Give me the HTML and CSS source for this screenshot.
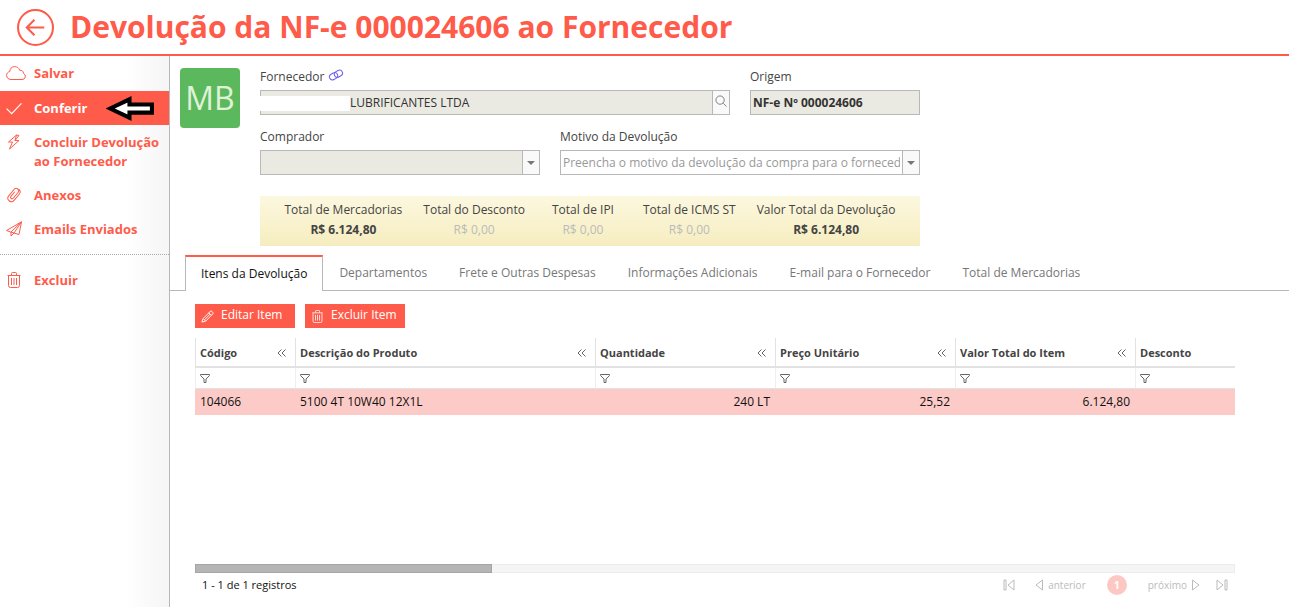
FILE: index.html
```html
<!DOCTYPE html>
<html lang="pt-BR">
<head>
<meta charset="utf-8">
<title>Devolução da NF-e 000024606 ao Fornecedor</title>
<link rel="stylesheet" href="styles.css">
</head>
<body>
<svg class="sprite" aria-hidden="true">
  <symbol id="trash" viewBox="0 0 14 16"><path d="M.5 3.500h13M4.500 3V1.500q0-1 1-1h3q1 0 1 1V3M1.500 4v9.500q0 2 2 2h7q2 0 2-2V4M4.500 6v7M7 6v7M9.500 6v7"/></symbol>
  <symbol id="filter" viewBox="0 0 10 9"><path d="M.5.5h9v1L6 5v3.500H4V5L.5 1.500z"/></symbol>
  <symbol id="collapse" viewBox="0 0 9 8"><path d="M4.500.5L1 4l3.500 3.500M8.500.5L5 4l3.500 3.500"/></symbol>
</svg>
<header class="topbar">
  <a class="back" href="#" aria-label="Voltar"><svg viewBox="0 0 36 36"><circle cx="18" cy="18" r="17"/><path d="M26.500 18H9.500M17 10.500L9.500 18l7.500 7.500"/></svg></a>
  <h1 class="title">Devolução da NF-e 000024606 ao Fornecedor</h1>
</header>
<div class="layout">
  <nav class="sidebar">
    <a class="nav-item" href="#"><svg class="nav-icon cloud" viewBox="0 0 20 14"><path d="M5 13.500h11a3.200 3.200 0 0 0 1.500-6.100C17.500 5 15.500 4 13.800 4.400 13 2 11 .6 8.600.6 5.600.6 3.700 3 3.800 5.500 1.500 6 .6 7.800.6 9.400c0 2.300 1.800 4.100 4.400 4.100z"/></svg><span>Salvar</span></a>
    <a class="nav-item active" href="#"><svg class="nav-icon" viewBox="0 0 14 14"><path d="M.5 7.500L5 12l8.500-9"/></svg><span>Conferir</span>
      <svg class="pointer" viewBox="0 0 48 26"><path d="M4 13L23 4v5h22v8H23v5z"/></svg></a>
    <a class="nav-item" href="#"><svg class="nav-icon" viewBox="0 0 14 16"><path d="M9.500 1L1.500 8h4L2.500 15l9.500-8.500H8zM9.500 1L12 1.500 8 6.500"/></svg><span>Concluir Devolução<br>ao Fornecedor</span></a>
    <a class="nav-item" href="#"><svg class="nav-icon" viewBox="0 0 14 16"><g transform="rotate(40 7 8)"><path d="M10.500 5v7a3.500 3.500 0 0 1-7 0V3.500a2.500 2.500 0 0 1 5 0V11a1.500 1.500 0 0 1-3 0V5M10.500 5V3.500a3.500 3.500 0 0 0-3.500-3"/></g></svg><span>Anexos</span></a>
    <a class="nav-item" href="#"><svg class="nav-icon" viewBox="0 0 16 16"><path d="M15.500.8L.5 9.500 4.500 11 13 13.500zM15.500.8L5 11v4l3-3M15.500.8L8 12"/></svg><span>Emails Enviados</span></a>
    <a class="nav-item delete" href="#"><svg class="nav-icon"><use href="#trash"/></svg><span>Excluir</span></a>
  </nav>
  <main class="main">
    <section class="record">
      <div class="avatar">MB</div>
      <form class="form">
        <div class="field wide">
          <div class="label-row"><label for="fornecedor">Fornecedor</label><svg class="chain" viewBox="0 0 16 12"><g transform="rotate(-28 8 6)"><rect x="1" y="3" width="8.500" height="6" rx="3"/><rect x="6.500" y="3" width="8.500" height="6" rx="3"/></g></svg></div>
          <div class="control redacted"><input id="fornecedor" class="supplier" value="LUBRIFICANTES LTDA" readonly><button type="button" class="side" aria-label="Pesquisar"><svg class="search" viewBox="0 0 13 13"><circle cx="5.500" cy="5.500" r="4.500"/><path d="M9 9l3.500 3.500"/></svg></button></div>
        </div>
        <div class="field">
          <div class="label-row"><label for="origem">Origem</label></div>
          <div class="control"><input id="origem" class="origin" value="NF-e Nº 000024606" readonly></div>
        </div>
        <div class="field">
          <div class="label-row"><label for="comprador">Comprador</label></div>
          <div class="control"><select id="comprador"><option></option></select><span class="side caret"></span></div>
        </div>
        <div class="field wide">
          <div class="label-row"><label for="motivo">Motivo da Devolução</label></div>
          <div class="control editable"><select id="motivo"><option>Preencha o motivo da devolução da compra para o fornecedor</option></select><span class="side caret"></span></div>
        </div>
        <dl class="totals">
          <div class="total"><dt>Total de Mercadorias</dt><dd class="strong">R$ 6.124,80</dd></div>
          <div class="total"><dt>Total do Desconto</dt><dd>R$ 0,00</dd></div>
          <div class="total ipi"><dt>Total de IPI</dt><dd>R$ 0,00</dd></div>
          <div class="total"><dt>Total de ICMS ST</dt><dd>R$ 0,00</dd></div>
          <div class="total"><dt>Valor Total da Devolução</dt><dd class="strong">R$ 6.124,80</dd></div>
        </dl>
      </form>
    </section>
    <div class="tabs" role="tablist">
      <button class="tab selected" role="tab" aria-selected="true">Itens da Devolução</button>
      <button class="tab" role="tab">Departamentos</button>
      <button class="tab" role="tab">Frete e Outras Despesas</button>
      <button class="tab" role="tab">Informações Adicionais</button>
      <button class="tab" role="tab">E-mail para o Fornecedor</button>
      <button class="tab" role="tab">Total de Mercadorias</button>
    </div>
    <section class="panel">
      <div class="actions">
        <button class="action"><svg viewBox="0 0 14 14"><path d="M1 13l1-3.500L10 1.500q1-.8 2 .2l.5.500q1 1 .2 2L5 12zM2.500 9.500l2.500 2.500M8.500 3l2.700 2.700M3.800 10.500L10 4.300"/></svg><span>Editar Item</span></button>
        <button class="action"><svg><use href="#trash"/></svg><span>Excluir Item</span></button>
      </div>
      <div class="grid">
        <table class="items">
          <colgroup><col class="c-code"><col class="c-desc"><col class="c-num"><col class="c-num"><col class="c-num"><col></colgroup>
          <thead>
            <tr class="heads">
              <th><div class="head"><span>Código</span><button class="mini" aria-label="Recolher Código"><svg class="fold"><use href="#collapse"/></svg></button></div></th>
              <th><div class="head"><span>Descrição do Produto</span><button class="mini" aria-label="Recolher Descrição"><svg class="fold"><use href="#collapse"/></svg></button></div></th>
              <th><div class="head"><span>Quantidade</span><button class="mini" aria-label="Recolher Quantidade"><svg class="fold"><use href="#collapse"/></svg></button></div></th>
              <th><div class="head"><span>Preço Unitário</span><button class="mini" aria-label="Recolher Preço"><svg class="fold"><use href="#collapse"/></svg></button></div></th>
              <th><div class="head"><span>Valor Total do Item</span><button class="mini" aria-label="Recolher Valor Total"><svg class="fold"><use href="#collapse"/></svg></button></div></th>
              <th><div class="head"><span>Desconto</span></div></th>
            </tr>
            <tr class="filters">
              <td><button class="mini" aria-label="Filtrar Código"><svg class="funnel"><use href="#filter"/></svg></button></td>
              <td><button class="mini" aria-label="Filtrar Descrição"><svg class="funnel"><use href="#filter"/></svg></button></td>
              <td><button class="mini" aria-label="Filtrar Quantidade"><svg class="funnel"><use href="#filter"/></svg></button></td>
              <td><button class="mini" aria-label="Filtrar Preço"><svg class="funnel"><use href="#filter"/></svg></button></td>
              <td><button class="mini" aria-label="Filtrar Valor Total"><svg class="funnel"><use href="#filter"/></svg></button></td>
              <td><button class="mini" aria-label="Filtrar Desconto"><svg class="funnel"><use href="#filter"/></svg></button></td>
            </tr>
          </thead>
          <tbody>
            <tr class="row"><td>104066</td><td>5100 4T 10W40 12X1L</td><td class="num">240 LT</td><td class="num">25,52</td><td class="num">6.124,80</td><td></td></tr>
          </tbody>
        </table>
        <div class="track"><div class="thumb"></div></div>
      </div>
      <footer class="pager">
        <span class="count">1 - 1 de 1 registros</span>
        <button class="page" aria-label="Primeira página"><svg class="edge" viewBox="0 0 12 12"><path d="M1 1h2v10H1zM11 1L5 6l6 5z"/></svg></button>
        <button class="page previous"><svg viewBox="0 0 8 12"><path d="M7.500 1L1 6l6.500 5z"/></svg><span>anterior</span></button>
        <button class="current">1</button>
        <button class="page next"><span>próximo</span><svg viewBox="0 0 8 12"><path d="M.5 1L7 6 .5 11z"/></svg></button>
        <button class="page" aria-label="Última página"><svg class="edge" viewBox="0 0 12 12"><path d="M9 1h2v10H9zM1 1l6 5-6 5z"/></svg></button>
      </footer>
    </section>
  </main>
</div>
</body>
</html>
```

FILE: styles.css
```css
:root { --accent: #ff5b4a; --line: #b8b8b8; --soft: #e2e2e2; }
* { box-sizing: border-box; }
body { margin: 0; min-height: 100vh; display: flex; flex-direction: column; font: 12px/18px "Open Sans", sans-serif; color: #444; background: #fff; }
button, input, select { font: inherit; color: inherit; margin: 0; padding: 0; border: 0; background: none; border-radius: 0; }
svg { fill: none; stroke: currentColor; stroke-width: 1; flex: none; }
.sprite { display: none; }

.topbar { display: flex; align-items: center; gap: 16px; height: 56px; padding: 0 17px; border-bottom: 2px solid var(--accent); color: var(--accent); }
.back { display: flex; color: inherit; }
.back svg { width: 37px; height: 37px; stroke-width: 2; }
.title { margin: 0; font-size: 30px; line-height: 40px; font-weight: 700; }

.layout { flex: 1; display: flex; }
.sidebar { width: 170px; flex: none; border-right: 1px solid var(--line); background: linear-gradient(to right, #fff 75%, #f5f5f5); }
.nav-item { position: relative; display: flex; align-items: flex-start; gap: 12px; padding: 8px 6px 7px; font-size: 13px; line-height: 19px; font-weight: 700; color: var(--accent); text-decoration: none; }
.nav-icon { width: 16px; height: 16px; margin-top: 1px; }
.nav-icon.cloud { width: 20px; margin-right: -4px; }
.nav-item.active { margin-top: 1px; background: var(--accent); color: #fff; }
.pointer { position: absolute; left: 106px; top: 4px; width: 49px; height: 27px; fill: #fff; stroke: #000; stroke-width: 4; }
.nav-item.delete { margin-top: 8px; padding-top: 16px; border-top: 1px dotted #aaa; }

.main { flex: 1; min-width: 0; display: flex; flex-direction: column; }
.record { display: flex; gap: 20px; padding: 12px 10px 9px; }
.avatar { width: 60px; height: 60px; flex: none; border-radius: 4px; background: #5cb85c; color: #dff2d8; font: 32px/60px "Open Sans", sans-serif; text-align: center; }
.form { display: grid; grid-template-columns: 280px 170px 170px; column-gap: 20px; row-gap: 13px; }
.wide { grid-column: span 2; }
.label-row { display: flex; gap: 4px; height: 22px; }
.chain { width: 16px; height: 14px; color: #6a5cf0; }
.control { display: flex; height: 25px; border: 1px solid var(--line); background: #eaeae2; }
.control input, .control select { flex: 1; min-width: 0; height: 23px; padding: 0 2px; appearance: none; color: #333; }
.control.editable { background: #fff; }
.control.editable select { color: #999; }
.control .supplier { padding-left: 89px; }
.control .origin { font-weight: 700; }
.redacted { position: relative; }
.redacted::before { content: ""; position: absolute; left: -1px; top: 5px; width: 90px; height: 15px; background: #fff; }
.side { width: 17px; display: flex; align-items: center; justify-content: center; background: #f9f9f9; border-left: 1px solid var(--line); color: #777; }
.search { width: 12px; height: 12px; margin-bottom: 3px; }
.caret::after { content: ""; border: 4px solid transparent; border-top-color: #777; border-bottom: 0; }

.totals { grid-column: 1 / -1; display: flex; justify-content: center; gap: 21px; height: 50px; margin: 8px 0 0; padding: 5px 0; background: linear-gradient(#fcf8e0, #f6edbf); text-align: center; }
.total.ipi { padding: 0 8px 0 6px; }
.total dd { margin: 2px 0 0; color: #bbb; }
.total .strong { color: #444; font-weight: 700; }

.tabs { display: flex; height: 36px; padding-left: 15px; background: linear-gradient(var(--line), var(--line)) bottom / 100% 1px no-repeat; }
.tab { padding: 0 16px; color: #777; white-space: nowrap; }
.tab.selected { border: 1px solid var(--line); border-top: 2px solid var(--accent); border-bottom: 0; background: #fff; color: #111; padding: 0 15px; }

.panel { flex: 1; display: flex; flex-direction: column; padding: 13px 54px 11px 25px; }
.actions { display: flex; gap: 10px; }
.action { display: flex; align-items: center; gap: 7px; width: 100px; height: 24px; padding: 0 6px; background: var(--accent); color: #fff; white-space: nowrap; }
.action svg { width: 13px; height: 13px; }
.action span { padding-bottom: 2px; }
.grid { flex: 1; display: flex; flex-direction: column; margin-top: 10px; }
.items { width: 100%; table-layout: fixed; border-collapse: separate; border-spacing: 0; color: #111; }
.c-code { width: 100px; }
.c-desc { width: 300px; }
.c-num { width: 180px; }
.items th, .items td { padding: 0 5px; text-align: left; }
.heads th { height: 30px; border-left: 1px solid var(--soft); border-bottom: 2px solid var(--soft); color: #444; font-size: 11px; }
.head { display: flex; align-items: center; justify-content: space-between; padding: 2px 4px 0 0; }
.items .heads th, .items .filters td { padding-left: 4px; }
.filters td { height: 21px; border-left: 1px solid #eee; border-bottom: 1px solid var(--soft); }
.mini { display: flex; color: #666; }
.fold { width: 9px; height: 8px; }
.funnel { width: 10px; height: 9px; }
.row td { height: 26px; background: #fdcbc7; }
.items .num { text-align: right; }
.track { height: 9px; margin-top: auto; border: 1px solid #ececec; background: #f5f5f5; display: flex; }
.thumb { width: 297px; margin: -1px; background: #b5b5b5; border: 1px solid #a5a5a5; }
.pager { display: flex; align-items: center; height: 23px; padding: 0 7px; color: #111; }
.count { margin-right: auto; font-size: 11px; }
.page { display: flex; align-items: center; gap: 5px; font-size: 10px; color: #bbb; }
.page svg { width: 8px; height: 12px; }
.page .edge { width: 12px; }
.previous { margin-left: 20px; }
.current { width: 20px; height: 20px; margin: 0 21px; border-radius: 50%; background: #fdc8c4; color: #fff; font-size: 10px; font-weight: 700; }
.next { margin-right: 16px; }
```
